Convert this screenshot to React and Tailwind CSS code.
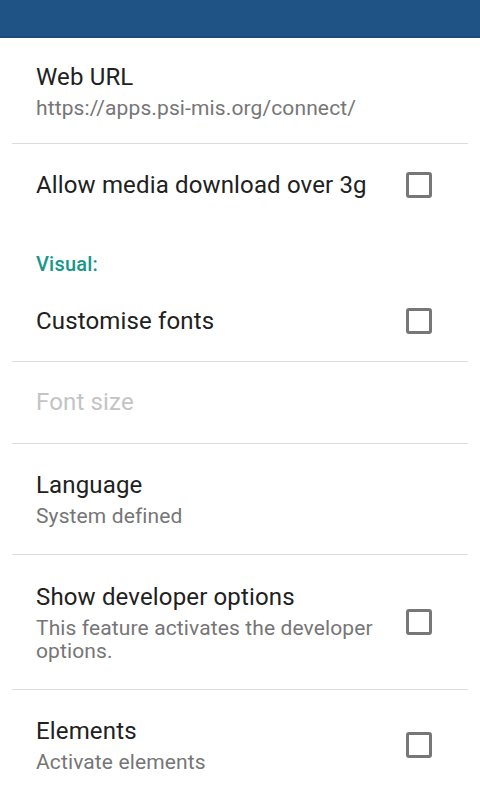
const Checkbox = () => (
  <div className="w-[26px] h-[26px] border-[3px] border-[#777777] rounded-[3px] shrink-0" />
);

const Divider = () => <div className="mx-3 h-px bg-[#dcdcdc]" />;

function Row({ title, subtitle, check, height, disabled }) {
  return (
    <div className={`flex items-center pl-9 pr-12 ${height}`}>
      <div className="flex-1 pr-4">
        <div className={`text-[24px] leading-[31px] tracking-[0.15px] ${disabled ? 'text-[#c4c4c4]' : 'text-[#212121]'}`}>{title}</div>
        {subtitle && (
          <div className="text-[21px] leading-[23px] mt-[4px] tracking-[0.12px] text-[#767676]">{subtitle}</div>
        )}
      </div>
      {check && <Checkbox />}
    </div>
  );
}

export default function App() {
  return (
    <div className="w-[480px] h-[800px] overflow-hidden bg-white font-['Roboto',sans-serif]">
      <div className="h-[38px] bg-[#1f5285] border-b-2 border-[#1b4a79]" />

      <Row title="Web URL" subtitle="https://apps.psi-mis.org/connect/" height="h-[105px]" />
      <Divider />
      <Row title="Allow media download over 3g" check height="h-[82px]" />

      <div className="h-[55px] pt-[26px] pl-9 text-[20px] leading-[24px] font-medium tracking-[0.2px] text-[#17978a]">Visual:</div>

      <Row title="Customise fonts" check height="h-[80px]" />
      <Divider />
      <Row title="Font size" disabled height="h-[81px]" />
      <Divider />
      <Row title="Language" subtitle="System defined" height="h-[110px]" />
      <Divider />
      <Row title="Show developer options" subtitle="This feature activates the developer options." check height="h-[134px]" />
      <Divider />
      <Row title="Elements" subtitle="Activate elements" check height="h-[110px]" />
    </div>
  );
}
